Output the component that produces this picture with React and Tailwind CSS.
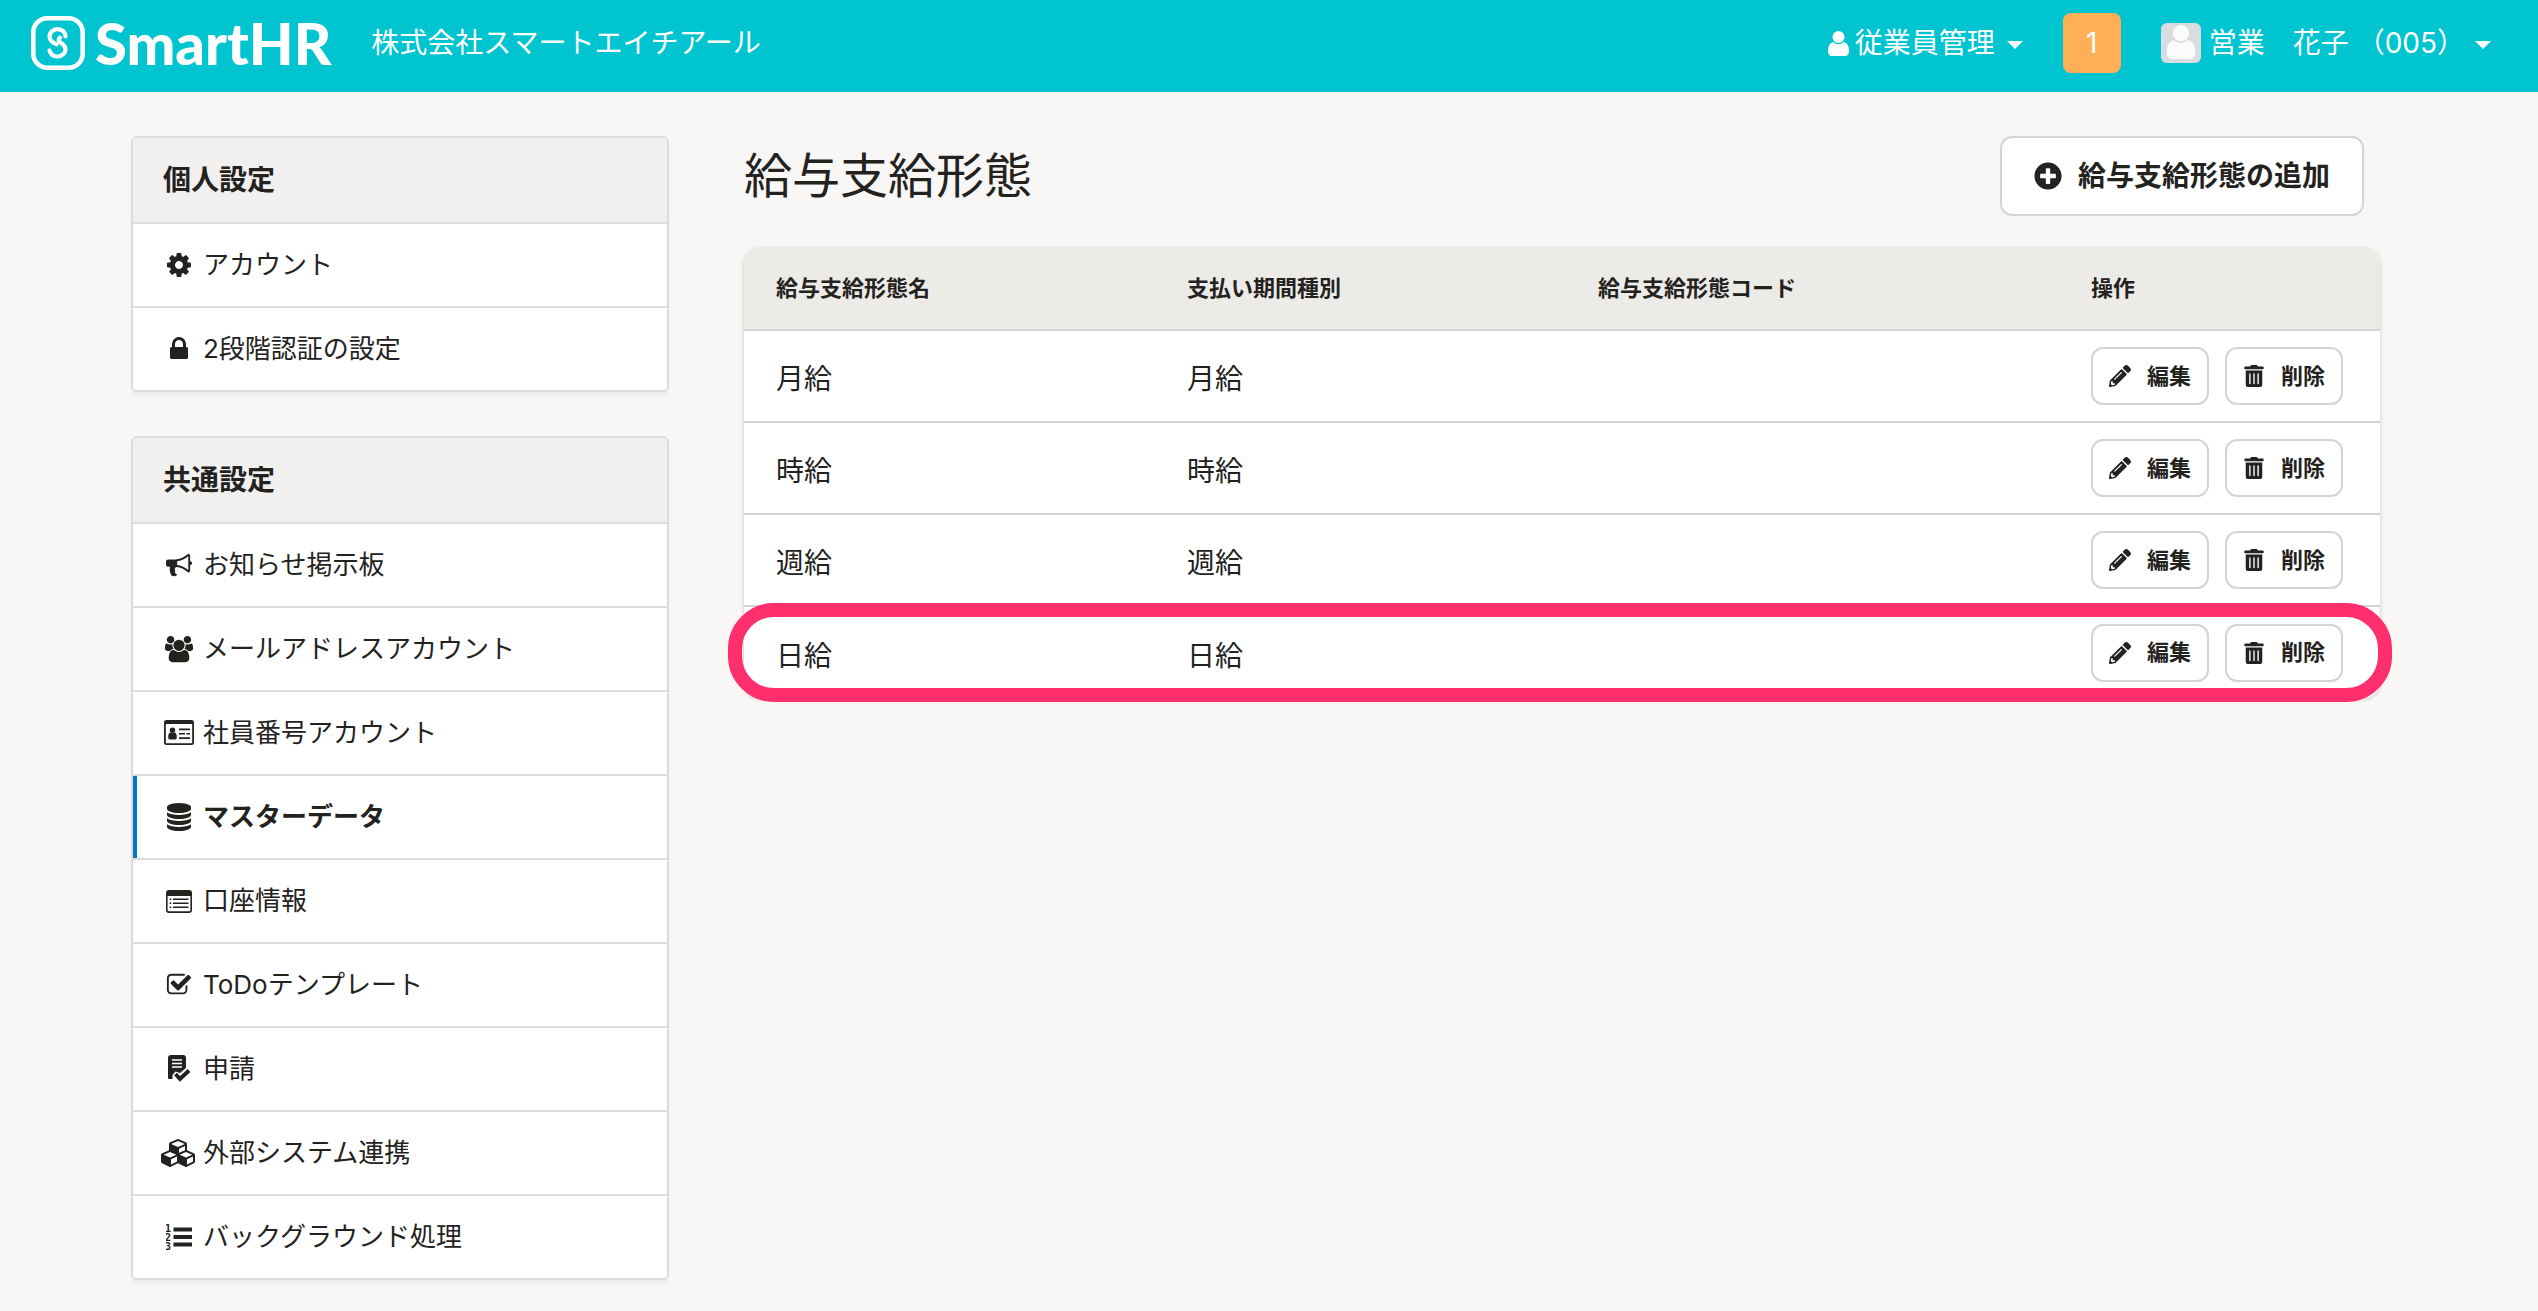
import { FaPencilAlt, FaPlusCircle, FaTrashAlt } from "react-icons/fa";

const PATHS = {
  cog: ["0 0 1792 1792", "M1152 896q0-106-75-181t-181-75-181 75-75 181 75 181 181 75 181-75 75-181zm512-109v222q0 12-8 23t-20 13l-185 28q-19 54-39 91 35 50 107 138 10 12 10 25t-9 23q-27 37-99 108t-94 71q-12 0-26-9l-138-108q-44 23-91 38-16 136-29 186-7 28-36 28h-222q-14 0-24.5-8.5t-11.5-21.5l-28-184q-49-16-90-37l-141 107q-10 9-25 9-14 0-25-11-126-114-165-168-7-10-7-23 0-12 8-23 15-21 51-66.5t54-70.5q-27-50-41-99l-183-27q-13-2-21-12.5t-8-23.5v-222q0-12 8-23t19-13l186-28q14-46 39-92-40-57-107-138-10-12-10-24 0-10 9-23 26-36 98.5-107.5t94.5-71.5q13 0 26 10l138 107q44-23 91-38 16-136 29-186 7-28 36-28h222q14 0 24.5 8.5t11.5 21.5l28 184q49 16 90 37l142-107q9-9 24-9 13 0 25 10 129 119 165 170 7 8 7 22 0 12-8 23-15 21-51 66.5t-54 70.5q26 50 41 98l183 28q13 2 21 12.5t8 23.5z"],
  lock: ["0 0 1792 1792", "M640 768h512v-192q0-106-75-181t-181-75-181 75-75 181v192zm832 96v576q0 40-28 68t-68 28h-960q-40 0-68-28t-28-68v-576q0-40 28-68t68-28h32v-192q0-184 132-316t316-132 316 132 132 316v192h32q40 0 68 28t28 68z"],
  bullhorn: ["0 0 1792 1792", "M1664 640q53 0 90.5 37.5t37.5 90.5-37.5 90.5-90.5 37.5v384q0 52-38 90t-90 38q-417-347-812-380-58 19-91 66t-31 100.5 40 92.5q-20 33-23 65.5t6 58 33.5 55 48 50 61.5 50.5q-29 58-111.5 83t-168.5 11.5-132-55.5q-7-23-29.5-87.5t-32-94.5-23-89-15-101 3.5-98.5 22-110.5h-122q-66 0-113-47t-47-113v-192q0-66 47-113t113-47h480q435 0 896-384 52 0 90 38t38 90v384zm-128 604v-954q-394 302-768 343v270q377 42 768 341z"],
  users: ["0 0 2048 1792", "M657 896q-162 5-265 128h-134q-82 0-138-40.5t-56-118.5q0-353 124-353 6 0 43.5 21t97.5 42.5 119 21.5q67 0 133-23-5 37-5 66 0 139 81 256zm1071 637q0 120-73 189.5t-194 69.5h-874q-121 0-194-69.5t-73-189.5q0-53 3.5-103.5t14-109 26.5-108.5 43-97.5 62-81 85.5-53.5 111.5-20q10 0 43 21.5t73 48 107 48 135 21.5 135-21.5 107-48 73-48 43-21.5q61 0 111.5 20t85.5 53.5 62 81 43 97.5 26.5 108.5 14 109 3.5 103.5zm-1024-1277q0 106-75 181t-181 75-181-75-75-181 75-181 181-75 181 75 75 181zm704 384q0 159-112.5 271.5t-271.5 112.5-271.5-112.5-112.5-271.5 112.5-271.5 271.5-112.5 271.5 112.5 112.5 271.5zm576 225q0 78-56 118.5t-138 40.5h-134q-103-123-265-128 81-117 81-256 0-29-5-66 66 23 133 23 59 0 119-21.5t97.5-42.5 43.5-21q124 0 124 353zm-128-609q0 106-75 181t-181 75-181-75-75-181 75-181 181-75 181 75 75 181z"],
  database: ["0 0 1792 1792", "M896 768q237 0 443-43t325-127v170q0 69-103 128t-280 93.5-385 34.5-385-34.5-280-93.5-103-128v-170q119 84 325 127t443 43zm0 768q237 0 443-43t325-127v170q0 69-103 128t-280 93.5-385 34.5-385-34.5-280-93.5-103-128v-170q119 84 325 127t443 43zm0-384q237 0 443-43t325-127v170q0 69-103 128t-280 93.5-385 34.5-385-34.5-280-93.5-103-128v-170q119 84 325 127t443 43zm0-1152q208 0 385 34.5t280 93.5 103 128v128q0 69-103 128t-280 93.5-385 34.5-385-34.5-280-93.5-103-128v-128q0-69 103-128t280-93.5 385-34.5z"],
  check: ["0 0 1792 1792", "M1472 930v318q0 119-84.5 203.5t-203.5 84.5h-832q-119 0-203.5-84.5t-84.5-203.5v-832q0-119 84.5-203.5t203.5-84.5h832q63 0 117 25 15 7 18 23 3 17-9 29l-49 49q-10 10-23 10-3 0-9-2-23-6-45-6h-832q-66 0-113 47t-47 113v832q0 66 47 113t113 47h832q66 0 113-47t47-113v-254q0-13 9-22l64-64q10-10 23-10 6 0 12 3 20 8 20 29zm231-489l-814 814q-24 24-57 24t-57-24l-430-430q-24-24-24-57t24-57l110-110q24-24 57-24t57 24l263 263 647-647q24-24 57-24t57 24l110 110q24 24 24 57t-24 57z"],
  cubes: ["0 0 2304 1792", "M640 1632l384-192v-314l-384 164v342zm-64-454l404-173-404-173-404 173zm1088 454l384-192v-314l-384 164v342zm-64-454l404-173-404-173-404 173zm-448-293l384-165v-266l-384 164v267zm-64-379l441-189-441-189-441 189zm1088 518v416q0 36-19 67t-52 47l-448 224q-25 14-57 14t-57-14l-448-224q-4-2-7-4-2 2-7 4l-448 224q-25 14-57 14t-57-14l-448-224q-33-16-52-47t-19-67v-416q0-38 21.5-70t56.5-48l434-186v-400q0-38 21.5-70t56.5-48l448-192q23-10 50-10t50 10l448 192q35 16 56.5 48t21.5 70v400l434 186q36 16 57 48t21 70z"],
};

function Glyph({ name, className }) {
  const [viewBox, d] = PATHS[name];
  return (
    <svg viewBox={viewBox} className={className} fill="currentColor" aria-hidden="true">
      <path d={d} />
    </svg>
  );
}

function IdCard() {
  return (
    <svg viewBox="0 0 30 26" className="h-[26px] w-[30px]" fill="currentColor" aria-hidden="true">
      <path fillRule="evenodd" d="M2.500 0h25A2.500 2.500 0 0 1 30 2.500v20a2.500 2.500 0 0 1-2.500 2.500h-25A2.500 2.500 0 0 1 0 22.500v-20A2.500 2.500 0 0 1 2.500 0zM1.800 4v18.500q0 .8.800.8h24.800q.8 0 .8-.8V4z" />
      <circle cx="8.500" cy="10.300" r="2.700" />
      <path d="M4.200 17.500q0-5 2.500-5 1.800 1.400 3.600 0 2.500 0 2.500 5 0 2-1.500 2H5.700q-1.500 0-1.500-2z" />
      <path d="M15 8.500h11v1.700H15zM15 13h6v1.500h-6zM22.500 13H26v1.500h-3.500zM15 17.300h11V19H15z" />
    </svg>
  );
}

function ListAlt() {
  return (
    <svg viewBox="0 0 26 23" className="h-[23px] w-[26px]" fill="currentColor" aria-hidden="true">
      <path fillRule="evenodd" d="M3 0h20a3 3 0 0 1 3 3v17a3 3 0 0 1-3 3H3a3 3 0 0 1-3-3V3a3 3 0 0 1 3-3zM1.600 6v14q0 1.300 1.300 1.300h20.200q1.300 0 1.300-1.300V6z" />
      <path d="M3.600 8.500h1.700v1.500H3.600zM3.600 12.500h1.700V14H3.600zM3.600 16.500h1.700V18H3.600zM7 8.500h15.500v1.500H7zM7 12.500h15.500V14H7zM7 16.500h15.500V18H7z" />
    </svg>
  );
}

function ListOl() {
  return (
    <svg viewBox="0 0 26 26" className="size-[26px]" fill="currentColor" aria-hidden="true">
      <path d="M7.500 3.500H26v4H7.500zM7.500 11H26v4H7.500zM7.500 18.500H26v4H7.500z" />
      <g className="font-['DejaVu_Sans_Mono',monospace] text-[10px] font-bold">
        <text x="-1" y="7.500">1</text>
        <text x="-1" y="16.500">2</text>
        <text x="-1" y="25.500">3</text>
      </g>
    </svg>
  );
}

function RequestDoc() {
  return (
    <svg viewBox="0 0 24 28" className="h-7 w-6" fill="none" aria-hidden="true">
      <path fill="currentColor" d="M4 0h12q3 0 3 3v20q0 1-1 1H2q-1 0-1-1V3q0-3 3-3z" />
      <path d="M5 5h10M5 8.500h10M5 12h10" stroke="#fff" strokeWidth="1.400" />
      <path fill="#fff" d="M5.500 28v-8l3-3.500 4.500 1.500 7-6v16z" />
      <path d="M8.500 19l4.500 5 9-8.500" stroke="currentColor" strokeWidth="4" />
    </svg>
  );
}

function UserGlyph({ className }) {
  return (
    <svg viewBox="0 0 21 25" className={className} fill="currentColor" aria-hidden="true">
      <circle cx="10.500" cy="6" r="6" />
      <path d="M5 11q5.500 4.500 11 0 5 1.500 5 9 0 5-4 5H4q-4 0-4-5 0-7.500 5-9z" />
    </svg>
  );
}

function Caret() {
  return (
    <svg viewBox="0 0 16 8" className="mt-1 h-2 w-4" fill="currentColor" aria-hidden="true">
      <path d="M0 0h16L8 8z" />
    </svg>
  );
}

function Logo() {
  return (
    <a href="#" className="flex items-center gap-2.5">
      <svg viewBox="0 0 54 54" className="size-[54px]" fill="none" stroke="#fff" aria-hidden="true">
        <rect x="2.300" y="2.300" width="49.400" height="49.400" rx="14" strokeWidth="4.600" />
        <path d="M34.500 20.500c0-4-3-7.300-8-7.300-4.600 0-8 3.400-8 7.300 0 5 4 6.500 7 7.800" strokeWidth="4.200" strokeLinecap="round" />
        <path d="M18.500 34.500c1 3.600 4 6 8 6 4.600 0 8-3.400 8-7.300 0-4.500-4-5.500-6-7.500-1.500-1.500-.5-3 .5-4" strokeWidth="4.200" strokeLinecap="round" />
      </svg>
      <span className="font-['Lato'] text-[58px] leading-none font-black">SmartHR</span>
    </a>
  );
}

const personal = [
  { label: "アカウント", icon: <Glyph name="cog" className="size-7" /> },
  { label: "2段階認証の設定", icon: <Glyph name="lock" className="size-7" /> },
];

const common = [
  { label: "お知らせ掲示板", icon: <Glyph name="bullhorn" className="size-[26px]" /> },
  { label: "メールアドレスアカウント", icon: <Glyph name="users" className="h-7 w-[30px]" /> },
  { label: "社員番号アカウント", icon: <IdCard /> },
  { label: "マスターデータ", icon: <Glyph name="database" className="size-7" />, active: true },
  { label: "口座情報", icon: <ListAlt /> },
  { label: "ToDoテンプレート", icon: <Glyph name="check" className="size-[26px]" /> },
  { label: "申請", icon: <RequestDoc /> },
  { label: "外部システム連携", icon: <Glyph name="cubes" className="h-7 w-9" /> },
  { label: "バックグラウンド処理", icon: <ListOl /> },
];

function SideCard({ title, items }) {
  return (
    <section className="overflow-hidden rounded-md border-2 border-[#dcdcdc] bg-white shadow-[0_5px_2px_#0000000a]">
      <h2 className="bg-[#f1f0ee] px-[30px] py-[22px] text-[28px] leading-10 font-bold">{title}</h2>
      <ul>
        {items.map((item) => (
          <li key={item.label} className="border-t-2 border-[#dcdcdc]">
            <a
              href="#"
              aria-current={item.active ? "page" : undefined}
              className={
                item.active
                  ? "flex items-center border-l-4 border-[#0077c7] py-[21px] pr-6 pl-6 font-bold"
                  : "flex items-center py-[21px] pr-6 pl-7"
              }
            >
              <span className="flex w-9 shrink-0 justify-center">{item.icon}</span>
              <span className="pl-1.5 text-[26px] leading-10">{item.label}</span>
            </a>
          </li>
        ))}
      </ul>
    </section>
  );
}

function RowButton({ icon, children }) {
  return (
    <button
      type="button"
      className="flex h-[58px] w-[118px] items-center justify-center gap-4 rounded-xl border-2 border-[#d6d3d0] bg-white text-[22px] font-bold"
    >
      {icon}
      {children}
    </button>
  );
}

const rows = ["月給", "時給", "週給", "日給"];

export default function App() {
  return (
    <div className="min-h-screen bg-[#f8f7f6] font-['Inter','Noto_Sans_CJK_JP',sans-serif] text-[#23221e]">
      <header className="flex h-[92px] items-center justify-between bg-[#00c4cf] pr-[47px] pl-[31px] pb-1.5 text-[28px] text-white">
        <div className="flex items-center gap-10">
          <Logo />
          <span>株式会社スマートエイチアール</span>
        </div>
        <div className="flex items-center">
          <button type="button" className="flex items-center">
            <UserGlyph className="mr-1.5 h-[25px] w-[21px]" />
            <span className="mr-3">従業員管理</span>
            <Caret />
          </button>
          <button type="button" className="ml-10 h-[60px] w-[58px] rounded-lg bg-[#ffb057]">
            1
          </button>
          <button type="button" className="ml-10 flex items-center">
            <span className="mr-2 flex size-10 items-end justify-center rounded-md bg-[#d9dde1] pb-1 text-[#fafbfb]">
              <UserGlyph className="h-[34px] w-[30px]" />
            </span>
            <span className="mr-2.5 whitespace-pre">営業　花子 （005）</span>
            <Caret />
          </button>
        </div>
      </header>

      <div className="flex gap-[75px] pt-11 pr-[158px] pb-8 pl-[131px]">
        <nav className="flex w-[538px] shrink-0 flex-col gap-11">
          <SideCard title="個人設定" items={personal} />
          <SideCard title="共通設定" items={common} />
        </nav>

        <main className="min-w-0 flex-1">
          <div className="flex items-center justify-between pr-4">
            <h1 className="text-[48px] leading-[80px]">給与支給形態</h1>
            <button
              type="button"
              className="flex h-20 items-center gap-4 rounded-xl border-2 border-[#d6d3d0] bg-white px-8 text-[28px] font-bold"
            >
              <FaPlusCircle className="size-7" />
              給与支給形態の追加
            </button>
          </div>

          <div className="relative mt-8">
            <div className="overflow-hidden rounded-2xl bg-white shadow-[0_1px_4px_#00000033]">
              <table className="w-full table-fixed text-left">
                <colgroup>
                  <col className="w-[411px]" />
                  <col className="w-[411px]" />
                  <col />
                  <col className="w-[321px]" />
                </colgroup>
                <thead className="bg-[#edebe8] text-[22px] font-bold">
                  <tr className="h-[82px]">
                    <th className="px-8">給与支給形態名</th>
                    <th className="px-8">支払い期間種別</th>
                    <th className="px-8">給与支給形態コード</th>
                    <th className="px-8">操作</th>
                  </tr>
                </thead>
                <tbody className="text-[28px]">
                  {rows.map((name) => (
                    <tr key={name} className="h-[92px] border-t-2 border-[#d6d3d0]">
                      <td className="px-8 pt-1.5">{name}</td>
                      <td className="px-8 pt-1.5">{name}</td>
                      <td className="px-8" />
                      <td className="pl-8">
                        <div className="flex gap-4">
                          <RowButton icon={<FaPencilAlt className="size-[22px]" />}>編集</RowButton>
                          <RowButton icon={<FaTrashAlt className="size-[22px]" />}>削除</RowButton>
                        </div>
                      </td>
                    </tr>
                  ))}
                </tbody>
              </table>
            </div>
            <div className="pointer-events-none absolute -right-3 -bottom-1 -left-4 h-[99px] rounded-[46px] border-[14px] border-[#ff2e6d]" />
          </div>
        </main>
      </div>
    </div>
  );
}
